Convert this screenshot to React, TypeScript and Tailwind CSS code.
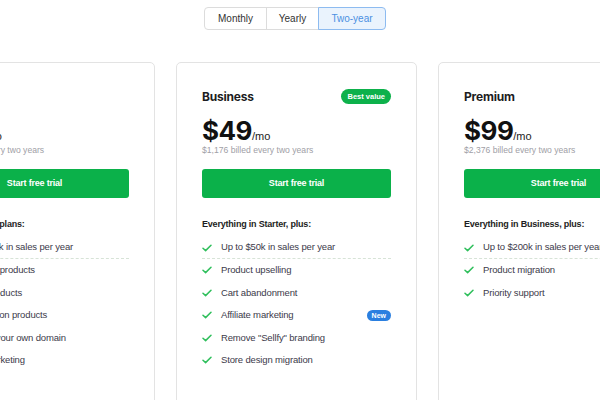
import { Fragment } from 'react'

type Feature = { text: string; badge?: string; dashed?: boolean }
type Plan = {
  name: string
  price: string
  billed: string
  badge?: string
  heading: string
  features: Feature[]
}

const plans: Plan[] = [
  {
    name: 'Starter',
    price: '$19',
    billed: '$456 billed every two years',
    heading: 'Included in all plans:',
    features: [
      { text: 'Up to $10k in sales per year', dashed: true },
      { text: 'Unlimited products' },
      { text: 'Digital products' },
      { text: 'Subscription products' },
      { text: 'Connect your own domain' },
      { text: 'Email marketing' },
    ],
  },
  {
    name: 'Business',
    price: '$49',
    billed: '$1,176 billed every two years',
    badge: 'Best value',
    heading: 'Everything in Starter, plus:',
    features: [
      { text: 'Up to $50k in sales per year', dashed: true },
      { text: 'Product upselling' },
      { text: 'Cart abandonment' },
      { text: 'Affiliate marketing', badge: 'New' },
      { text: 'Remove "Sellfy" branding' },
      { text: 'Store design migration' },
    ],
  },
  {
    name: 'Premium',
    price: '$99',
    billed: '$2,376 billed every two years',
    heading: 'Everything in Business, plus:',
    features: [
      { text: 'Up to $200k in sales per year', dashed: true },
      { text: 'Product migration' },
      { text: 'Priority support' },
    ],
  },
]

function Check() {
  return (
    <svg width="10" height="8" viewBox="0 0 10 8" fill="none" className="shrink-0">
      <path d="M1 4.2 3.6 6.6 9 1.2" stroke="#2fbf5c" strokeWidth="1.5" strokeLinecap="round" strokeLinejoin="round" />
    </svg>
  )
}

function PlanCard({ plan }: { plan: Plan }) {
  return (
    <div className="w-[241px] h-[360px] shrink-0 rounded-[5px] border border-[#e3e3e3] bg-white px-[25px] pt-[26px]">
      <div className="flex h-[16px] items-center justify-between">
        <span className="font-['Inter',sans-serif] text-[12px] font-bold tracking-[-0.2px] text-[#1d1d22]">
          {plan.name}
        </span>
        {plan.badge && (
          <span className="-mt-[1px] rounded-full bg-[#0db14b] px-[6px] py-[2px] text-[7.5px] font-bold leading-[11px] text-white">
            {plan.badge}
          </span>
        )}
      </div>
      <div className="mt-[12px] flex items-baseline">
        <span className="font-['Inter',sans-serif] text-[26px] font-bold leading-[28px] tracking-[-0.5px] text-[#111]">
          {plan.price}
        </span>
        <span className="text-[11px] text-[#222]">/mo</span>
      </div>
      <div className="-mt-[1px] text-[8.6px] leading-[12px] text-[#a0a0a6]">{plan.billed}</div>
      <button className="mt-[13px] h-[29px] w-full rounded-[3px] bg-[#0bb14a] text-[9px] font-bold tracking-[-0.2px] text-white">
        Start free trial
      </button>
      <div className="mt-[20px] text-[9px] font-bold leading-[12px] tracking-[-0.2px] text-[#1d1d22]">
        {plan.heading}
      </div>
      <div className="mt-[7px] flex flex-col">
        {plan.features.map((f) => (
          <Fragment key={f.text}>
            <div
              className={
                f.dashed
                  ? 'flex h-[22px] items-center border-b border-dashed border-[#d7e3d7]'
                  : 'flex h-[22.5px] items-center'
              }
            >
              <Check />
              <span className="ml-[9px] text-[9.5px] tracking-[-0.15px] text-[#3c3a4a]">{f.text}</span>
              {f.badge && (
                <span className="ml-auto rounded-full bg-[#2a7fe0] px-[5px] text-[7px] font-bold leading-[11px] text-white">
                  {f.badge}
                </span>
              )}
            </div>
          </Fragment>
        ))}
      </div>
    </div>
  )
}

export default function App() {
  const tabs = [
    { label: 'Monthly', w: 'w-[63px]' },
    { label: 'Yearly', w: 'w-[53px]' },
    { label: 'Two-year', w: 'w-[68px]' },
  ]
  return (
    <div className="h-[400px] w-[600px] overflow-hidden bg-white font-['Liberation_Sans',Arial,sans-serif]">
      <div className="ml-[204px] pt-[7px] flex">
        {tabs.map((t, i) => {
          const active = i === 2
          return (
            <div
              key={t.label}
              className={
                active
                  ? `${t.w} -ml-px flex h-[23px] items-center justify-center rounded-r-[4px] border border-[#8dbbf0] bg-[#eaf3fd] text-[10px] text-[#4b8fe2]`
                  : i === 0
                    ? `${t.w} flex h-[23px] items-center justify-center rounded-l-[4px] border border-[#dcdcdc] bg-white text-[10px] text-[#333]`
                    : `${t.w} -ml-px flex h-[23px] items-center justify-center border border-[#dcdcdc] bg-white text-[10px] text-[#333]`
              }
            >
              {t.label}
            </div>
          )
        })}
      </div>
      <div className="mt-[32px] -ml-[86px] flex gap-[21px]">
        {plans.map((p) => (
          <PlanCard key={p.name} plan={p} />
        ))}
      </div>
    </div>
  )
}
